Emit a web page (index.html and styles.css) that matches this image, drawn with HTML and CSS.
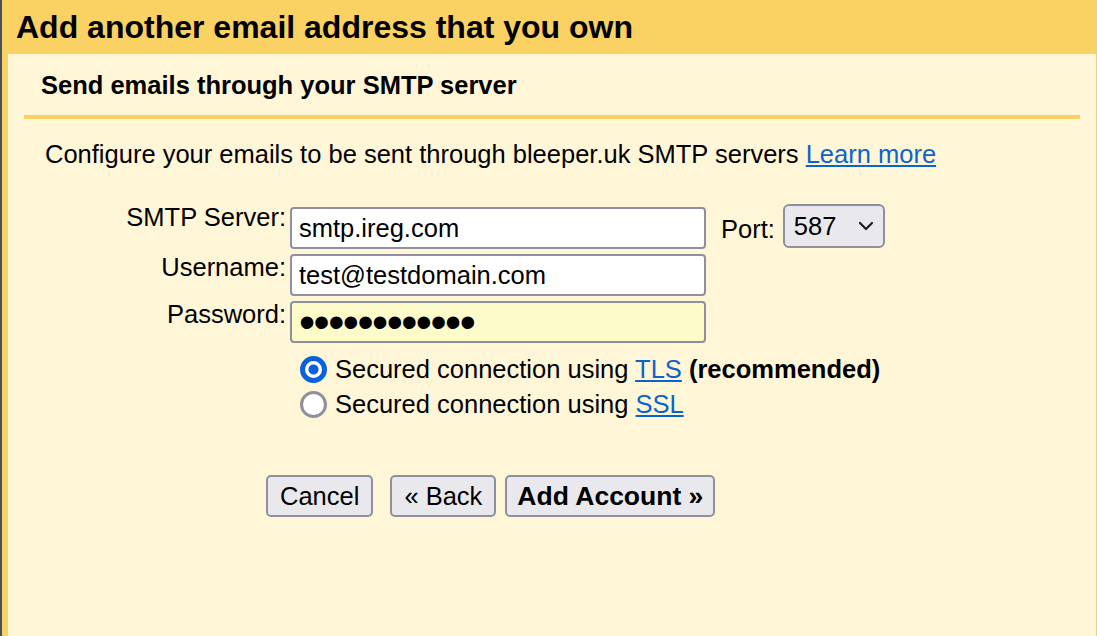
FILE: index.html
```html
<!DOCTYPE html>
<html lang="en">
  <head>
    <meta charset="UTF-8" />
    <title>Add another email address</title>
    <meta name="viewport" content="width=device-width, initial-scale=1.0" />
    <link rel="stylesheet" href="styles.css">
  </head>
  <body>
    <div class="dialog">
      <h1 class="dialog-title">Add another email address that you own</h1>

      <div class="panel">
        <h2 class="section-head">Send emails through your SMTP server</h2>

        <p class="intro">
          Configure your emails to be sent through bleeper.uk SMTP servers
          <a href="#">Learn more</a>
        </p>

        <div class="form">
          <label for="smtp">SMTP Server:</label>
          <input class="field field-first" id="smtp" type="text" value="smtp.ireg.com" />
          <div class="port">
            <label for="port">Port:</label>
            <div class="select-wrap">
              <select id="port" class="select">
                <option>587</option>
                <option>465</option>
                <option>25</option>
              </select>
              <svg class="chevron" width="16" height="10" viewBox="0 0 16 10">
                <polyline points="2,2 8,8 14,2" fill="none" stroke="#1c1b22" stroke-width="2.2" stroke-linecap="round" stroke-linejoin="round" />
              </svg>
            </div>
          </div>

          <label for="user">Username:</label>
          <input class="field" id="user" type="text" value="test@testdomain.com" />
          <div></div>

          <label for="pass">Password:</label>
          <input class="field field-password" id="pass" type="password" value="secretpass12" />
          <div></div>
        </div>

        <div class="options">
          <label class="option">
            <input type="radio" name="security" checked />
            <span>Secured connection using <a href="#">TLS</a> <strong>(recommended)</strong></span>
          </label>
          <label class="option">
            <input type="radio" name="security" />
            <span>Secured connection using <a href="#">SSL</a></span>
          </label>
        </div>

        <div class="actions">
          <button class="btn btn-cancel">Cancel</button>
          <button class="btn btn-back">&laquo; Back</button>
          <button class="btn btn-primary">Add Account &raquo;</button>
        </div>
      </div>
    </div>
  </body>
</html>
```

FILE: styles.css
```css
* {
  box-sizing: border-box;
}

html,
body {
  height: 100%;
}

body {
  margin: 0;
  background: #4b5058;
  font-family: "Liberation Sans", Arial, sans-serif;
  font-size: 25.5px;
  color: #000;
  overflow: hidden;
}

.dialog {
  height: 100%;
  margin-left: 2px;
  padding: 0 1px 0 6px;
  background: #fad163;
  display: flex;
  flex-direction: column;
}

.dialog-title {
  margin: 0;
  padding-left: 8px;
  font-size: 32px;
  line-height: 54px;
  font-weight: bold;
}

.panel {
  flex: 1;
  background: #fff6d8;
}

.section-head {
  margin: 0 16px;
  padding: 16px 17px 15px;
  border-bottom: 4px solid #fad163;
  font-size: 25.5px;
  line-height: 30px;
  font-weight: bold;
}

.intro {
  margin: 20px 0 0;
  padding-left: 37px;
  line-height: 30px;
}

a {
  color: #0b63ce;
  text-decoration: underline;
}

.form {
  display: grid;
  grid-template-columns: 278px 416px auto;
  column-gap: 4px;
  row-gap: 5px;
  align-items: start;
  margin-top: 35px;
}

.form label {
  text-align: right;
  line-height: 26px;
}

.field {
  height: 42px;
  margin: 0;
  padding: 0 7px;
  border: 2px solid #8f8f9d;
  border-radius: 4px;
  background: #fff;
  font-family: inherit;
  font-size: 25.5px;
  color: #000;
}

.field-first {
  margin-top: 3px;
}

.field-password {
  background: #fefbcb;
  font-size: 46px;
  letter-spacing: -1.5px;
}

.port {
  display: flex;
  align-items: center;
  gap: 8px;
  margin-left: 11px;
}

.port label {
  margin-top: 5px;
}

.select-wrap {
  position: relative;
}

.select {
  display: block;
  appearance: none;
  width: 102px;
  height: 44px;
  margin: 0;
  padding: 0 0 0 9px;
  border: 2px solid #8f8f9d;
  border-radius: 6px;
  background: #e9e9ed;
  font-family: inherit;
  font-size: 25.5px;
  color: #000;
}

.chevron {
  position: absolute;
  right: 11px;
  top: 17px;
  pointer-events: none;
}

.options {
  margin-top: 9px;
  padding-left: 292px;
  line-height: 35px;
}

.option {
  display: flex;
  align-items: center;
  gap: 8px;
}

.option input {
  appearance: none;
  width: 27px;
  height: 27px;
  margin: 0;
  border: 3px solid #8f8f9d;
  border-radius: 50%;
  background: #fff;
}

.option input:checked {
  border: 5px solid #0b61dc;
  background: radial-gradient(circle, #0b61dc 0 4.5px, #fff 5.5px);
}

.actions {
  display: flex;
  margin-top: 53px;
  padding-left: 258px;
}

.btn {
  height: 42px;
  padding: 0 12px;
  border: 2px solid #8f8f9d;
  border-radius: 5px;
  background: #e9e9ed;
  font-family: inherit;
  font-size: 25.5px;
  color: #000;
  cursor: pointer;
}

.btn-cancel {
  margin-right: 17px;
}

.btn-back {
  margin-right: 9px;
}

.btn-primary {
  padding: 0 10px;
  font-size: 26.5px;
  font-weight: bold;
}
```
